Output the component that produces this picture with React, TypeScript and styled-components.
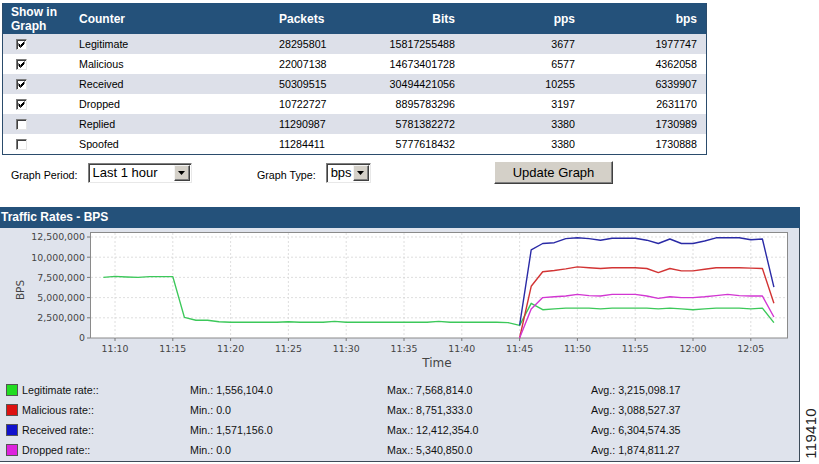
import { createGlobalStyle, styled } from "styled-components";

const GlobalStyle = createGlobalStyle`
  body {
    margin: 0;
    background: #fff;
    font-family: "Liberation Sans", Arial, sans-serif;
    color: #000;
  }
`;

const Page = styled.div`
  width: 819px;
  height: 464px;
  padding-top: 3px;
  box-sizing: border-box;
  overflow: hidden;
`;

const Table = styled.div`
  margin-left: 2px;
  width: 705px;
  border: 1px solid #2b4c6c;
  border-top: none;
  box-sizing: border-box;
`;

const cols = "76px 200px 100px 76px 120px 122px 9px";

const HeadRow = styled.div`
  display: grid;
  grid-template-columns: ${cols};
  height: 31px;
  background: #24517a;
  color: #fff;
  font-weight: bold;
  font-size: 12px;
  line-height: 14px;
  align-items: center;
`;

const HeadCell = styled.div<{ $right?: boolean; $pad?: number }>`
  text-align: ${(p) => (p.$right ? "right" : "left")};
  padding-left: ${(p) => p.$pad ?? 0}px;
`;

const Row = styled.div<{ $alt: boolean }>`
  display: grid;
  grid-template-columns: ${cols};
  height: 20px;
  align-items: center;
  background: ${(p) => (p.$alt ? "#dde0e9" : "#fff")};
  font-size: 10.7px;
`;

const Cell = styled.div<{ $right?: boolean }>`
  text-align: ${(p) => (p.$right ? "right" : "left")};
  white-space: nowrap;
`;

const CheckBox = styled.span<{ $on: boolean }>`
  display: flex;
  align-items: center;
  justify-content: center;
  margin-left: 13px;
  width: 11px;
  height: 11px;
  box-sizing: border-box;
  background: #fff;
  border-top: 1px solid #7a7a7a;
  border-left: 1px solid #7a7a7a;
  border-right: 1px solid #e6e6e6;
  border-bottom: 1px solid #e6e6e6;
  box-shadow: inset 1px 1px 0 #404040;
`;

const Controls = styled.div`
  display: flex;
  align-items: center;
  margin-top: 6px;
  height: 23px;
  padding-left: 11px;
`;

const Field = styled.div<{ $w: number }>`
  display: flex;
  align-items: center;
  gap: 10px;
  width: ${(p) => p.$w}px;
`;

const Label = styled.span`
  font-size: 10.7px;
  margin-top: 5px;
  white-space: nowrap;
`;

const SelectBox = styled.div<{ $w: number }>`
  display: flex;
  align-items: center;
  justify-content: space-between;
  width: ${(p) => p.$w}px;
  height: 20px;
  box-sizing: border-box;
  background: #fff;
  border-top: 1px solid #808080;
  border-left: 1px solid #808080;
  border-right: 1px solid #e8e8e8;
  border-bottom: 1px solid #e8e8e8;
  box-shadow: inset 1px 1px 0 #404040;
  padding: 1px 1px 1px 4px;
  font-size: 13px;
`;

const DropBtn = styled.span`
  display: flex;
  align-items: center;
  justify-content: center;
  width: 16px;
  height: 16px;
  box-sizing: border-box;
  background: #d4d0c8;
  border-top: 1px solid #f4f4f4;
  border-left: 1px solid #f4f4f4;
  border-right: 1px solid #404040;
  border-bottom: 1px solid #404040;
  box-shadow: inset -1px -1px 0 #808080;
`;

const Button = styled.button`
  width: 119px;
  height: 23px;
  background: #d4d0c8;
  border-top: 1px solid #fff;
  border-left: 1px solid #fff;
  border-right: 1px solid #404040;
  border-bottom: 1px solid #404040;
  box-shadow: inset -1px -1px 0 #808080;
  font-family: "Liberation Sans", Arial, sans-serif;
  font-size: 13px;
  color: #000;
  padding: 0;
`;

const Bottom = styled.div`
  display: flex;
  align-items: flex-end;
  margin-top: 23px;
`;

const Panel = styled.div`
  width: 800px;
`;

const PanelHead = styled.div`
  height: 21px;
  line-height: 21px;
  background: #24517a;
  color: #fff;
  font-weight: bold;
  font-size: 12px;
  padding-left: 1px;
`;

const PanelBody = styled.div`
  background: #dfe3ec;
  border-right: 1px solid #3c4a58;
  border-bottom: 1px solid #3c4a58;
  height: 234px;
  box-sizing: border-box;
`;

const ChartSvg = styled.svg`
  display: block;
`;

const Legend = styled.div`
  margin-top: 6px;
  padding-left: 6px;
`;

const LegendRow = styled.div`
  display: grid;
  grid-template-columns: 184px 197px 204px 1fr;
  height: 20px;
  align-items: center;
  font-size: 10.7px;
  color: #111;
`;

const Name = styled.div`
  display: flex;
  align-items: center;
  gap: 4px;
`;

const Swatch = styled.span<{ $c: string }>`
  width: 12px;
  height: 12px;
  box-sizing: border-box;
  background: ${(p) => p.$c};
  border: 1px solid #555;
`;

const FigId = styled.div`
  writing-mode: vertical-rl;
  transform: rotate(180deg);
  font-size: 15px;
  color: #222;
  margin: 0 0 3px 2px;
  letter-spacing: 0.3px;
`;

const rows = [
  { name: "Legitimate", on: true, packets: "28295801", bits: "15817255488", pps: "3677", bps: "1977747" },
  { name: "Malicious", on: true, packets: "22007138", bits: "14673401728", pps: "6577", bps: "4362058" },
  { name: "Received", on: true, packets: "50309515", bits: "30494421056", pps: "10255", bps: "6339907" },
  { name: "Dropped", on: true, packets: "10722727", bits: "8895783296", pps: "3197", bps: "2631170" },
  { name: "Replied", on: false, packets: "11290987", bits: "5781382272", pps: "3380", bps: "1730989" },
  { name: "Spoofed", on: false, packets: "11284411", bits: "5777618432", pps: "3380", bps: "1730888" },
];

const legend = [
  { name: "Legitimate rate::", color: "#22dd22", min: "1,556,104.0", max: "7,568,814.0", avg: "3,215,098.17" },
  { name: "Malicious rate::", color: "#dd1111", min: "0.0", max: "8,751,333.0", avg: "3,088,527.37" },
  { name: "Received rate::", color: "#1111cc", min: "1,571,156.0", max: "12,412,354.0", avg: "6,304,574.35" },
  { name: "Dropped rate::", color: "#dd22dd", min: "0.0", max: "5,340,850.0", avg: "1,874,811.27" },
];

// values in millions, one per minute
const green = [
  7.5, 7.62, 7.55, 7.5, 7.6, 7.6, 7.6, 2.55, 2.2, 2.2, 2.0, 1.95, 1.95, 1.95, 1.95, 1.95, 2.0, 1.95, 1.95,
  1.95, 2.05, 1.95, 1.95, 1.95, 1.95, 1.95, 1.95, 1.95, 1.95, 2.05, 1.95, 1.95, 1.95, 1.95, 1.95, 1.9, 1.56,
  4.3, 3.5, 3.6, 3.7, 3.7, 3.7, 3.6, 3.7, 3.7, 3.7, 3.7, 3.6, 3.7, 3.6, 3.5, 3.6, 3.7, 3.7, 3.7, 3.6, 3.7, 1.9,
];
const red = [0, 6.4, 8.2, 8.35, 8.55, 8.8, 8.7, 8.6, 8.7, 8.7, 8.7, 8.6, 8.1, 8.6, 8.3, 8.3, 8.5, 8.7, 8.7, 8.7, 8.65, 8.6, 4.3];
const blue = [1.57, 10.9, 11.7, 11.8, 12.3, 12.4, 12.3, 12.1, 12.35, 12.35, 12.35, 12.1, 11.7, 12.25, 11.7, 11.7, 12.0, 12.4, 12.4, 12.4, 12.15, 12.25, 6.3];
const magenta = [0, 3.6, 5.0, 5.1, 5.2, 5.4, 5.25, 5.2, 5.4, 5.4, 5.4, 5.2, 4.9, 5.1, 5.0, 5.0, 5.1, 5.25, 5.4, 5.25, 5.2, 5.2, 2.6];

const X = (m: number) => 115 + m * 11.56; // minutes from 11:10
const Y = (v: number) => 110 - v * 8.08;

const path = (data: number[], start: number) =>
  data.map((v, i) => `${i ? "L" : "M"}${X(start + i).toFixed(1)},${Y(v).toFixed(1)}`).join(" ");

const yTicks = [0, 2.5, 5, 7.5, 10, 12.5];
const yLabels = ["0", "2,500,000", "5,000,000", "7,500,000", "10,000,000", "12,500,000"];
const xLabels = ["11:10", "11:15", "11:20", "11:25", "11:30", "11:35", "11:40", "11:45", "11:50", "11:55", "12:00", "12:05"];

function Chart() {
  return (
    <ChartSvg width={798} height={146} fontFamily="'DejaVu Sans', sans-serif">
      <rect x={90.5} y={4.5} width={697} height={105.5} fill="#fff" stroke="#8a8a8a" />
      {yTicks.map((v, i) => (
        <g key={v}>
          {i > 0 && (
            <line x1={91} x2={787} y1={Y(v)} y2={Y(v)} stroke="#d6d6d6" strokeWidth={0.8} strokeDasharray="2 2" />
          )}
          <line x1={87} x2={90} y1={Y(v)} y2={Y(v)} stroke="#777" />
          <text x={85} y={Y(v) + 3.3} fontSize={9.4} fill="#444" textAnchor="end">
            {yLabels[i]}
          </text>
        </g>
      ))}
      {xLabels.map((l, i) => (
        <g key={l}>
          <line x1={X(i * 5)} x2={X(i * 5)} y1={5} y2={110} stroke="#d6d6d6" strokeWidth={0.8} strokeDasharray="2 2" />
          <line x1={X(i * 5)} x2={X(i * 5)} y1={110} y2={113} stroke="#777" />
          <text x={X(i * 5)} y={123.5} fontSize={9.4} fill="#444" textAnchor="middle">
            {l}
          </text>
        </g>
      ))}
      <text x={437} y={139} fontSize={12} fill="#444" textAnchor="middle">
        Time
      </text>
      <text x={24} y={62} fontSize={10.5} fill="#444" textAnchor="middle" transform="rotate(-90 24 62)">
        BPS
      </text>
      <g fill="none" strokeWidth={1.4} strokeLinejoin="round">
        <path d={path(green, -1)} stroke="#3cc85a" />
        <path d={path(red, 35)} stroke="#d23434" />
        <path d={path(blue, 35)} stroke="#2a2aa6" />
        <path d={path(magenta, 35)} stroke="#d236d2" />
      </g>
    </ChartSvg>
  );
}

function Check() {
  return (
    <svg width="7" height="7" viewBox="0 0 7 7">
      <path d="M0.5 2.5 L2.5 4.5 L6.5 0.5 M0.5 3.5 L2.5 5.5 L6.5 1.5 M0.5 4.5 L2.5 6.5 L6.5 2.5" stroke="#000" strokeWidth="1" fill="none" />
    </svg>
  );
}

function Arrow() {
  return (
    <svg width="7" height="4" viewBox="0 0 7 4">
      <path d="M0 0 H7 L3.5 4 Z" fill="#000" />
    </svg>
  );
}

export default function App() {
  return (
    <Page>
      <GlobalStyle />
      <Table>
        <HeadRow>
          <HeadCell $pad={8}>
            Show in
            <br />
            Graph
          </HeadCell>
          <HeadCell>Counter</HeadCell>
          <HeadCell>Packets</HeadCell>
          <HeadCell $right>Bits</HeadCell>
          <HeadCell $right>pps</HeadCell>
          <HeadCell $right>bps</HeadCell>
          <span />
        </HeadRow>
        {rows.map((r, i) => (
          <Row key={r.name} $alt={i % 2 === 0}>
            <CheckBox $on={r.on}>{r.on && <Check />}</CheckBox>
            <Cell>{r.name}</Cell>
            <Cell>{r.packets}</Cell>
            <Cell $right>{r.bits}</Cell>
            <Cell $right>{r.pps}</Cell>
            <Cell $right>{r.bps}</Cell>
            <span />
          </Row>
        ))}
      </Table>

      <Controls>
        <Field $w={246}>
          <Label>Graph Period:</Label>
          <SelectBox $w={104}>
            Last 1 hour
            <DropBtn>
              <Arrow />
            </DropBtn>
          </SelectBox>
        </Field>
        <Field $w={237}>
          <Label>Graph Type:</Label>
          <SelectBox $w={45}>
            bps
            <DropBtn>
              <Arrow />
            </DropBtn>
          </SelectBox>
        </Field>
        <Button>Update Graph</Button>
      </Controls>

      <Bottom>
        <Panel>
          <PanelHead>Traffic Rates - BPS</PanelHead>
          <PanelBody>
            <Chart />
            <Legend>
              {legend.map((l) => (
                <LegendRow key={l.name}>
                  <Name>
                    <Swatch $c={l.color} />
                    {l.name}
                  </Name>
                  <span>Min.: {l.min}</span>
                  <span>Max.: {l.max}</span>
                  <span>Avg.: {l.avg}</span>
                </LegendRow>
              ))}
            </Legend>
          </PanelBody>
        </Panel>
        <FigId>119410</FigId>
      </Bottom>
    </Page>
  );
}
